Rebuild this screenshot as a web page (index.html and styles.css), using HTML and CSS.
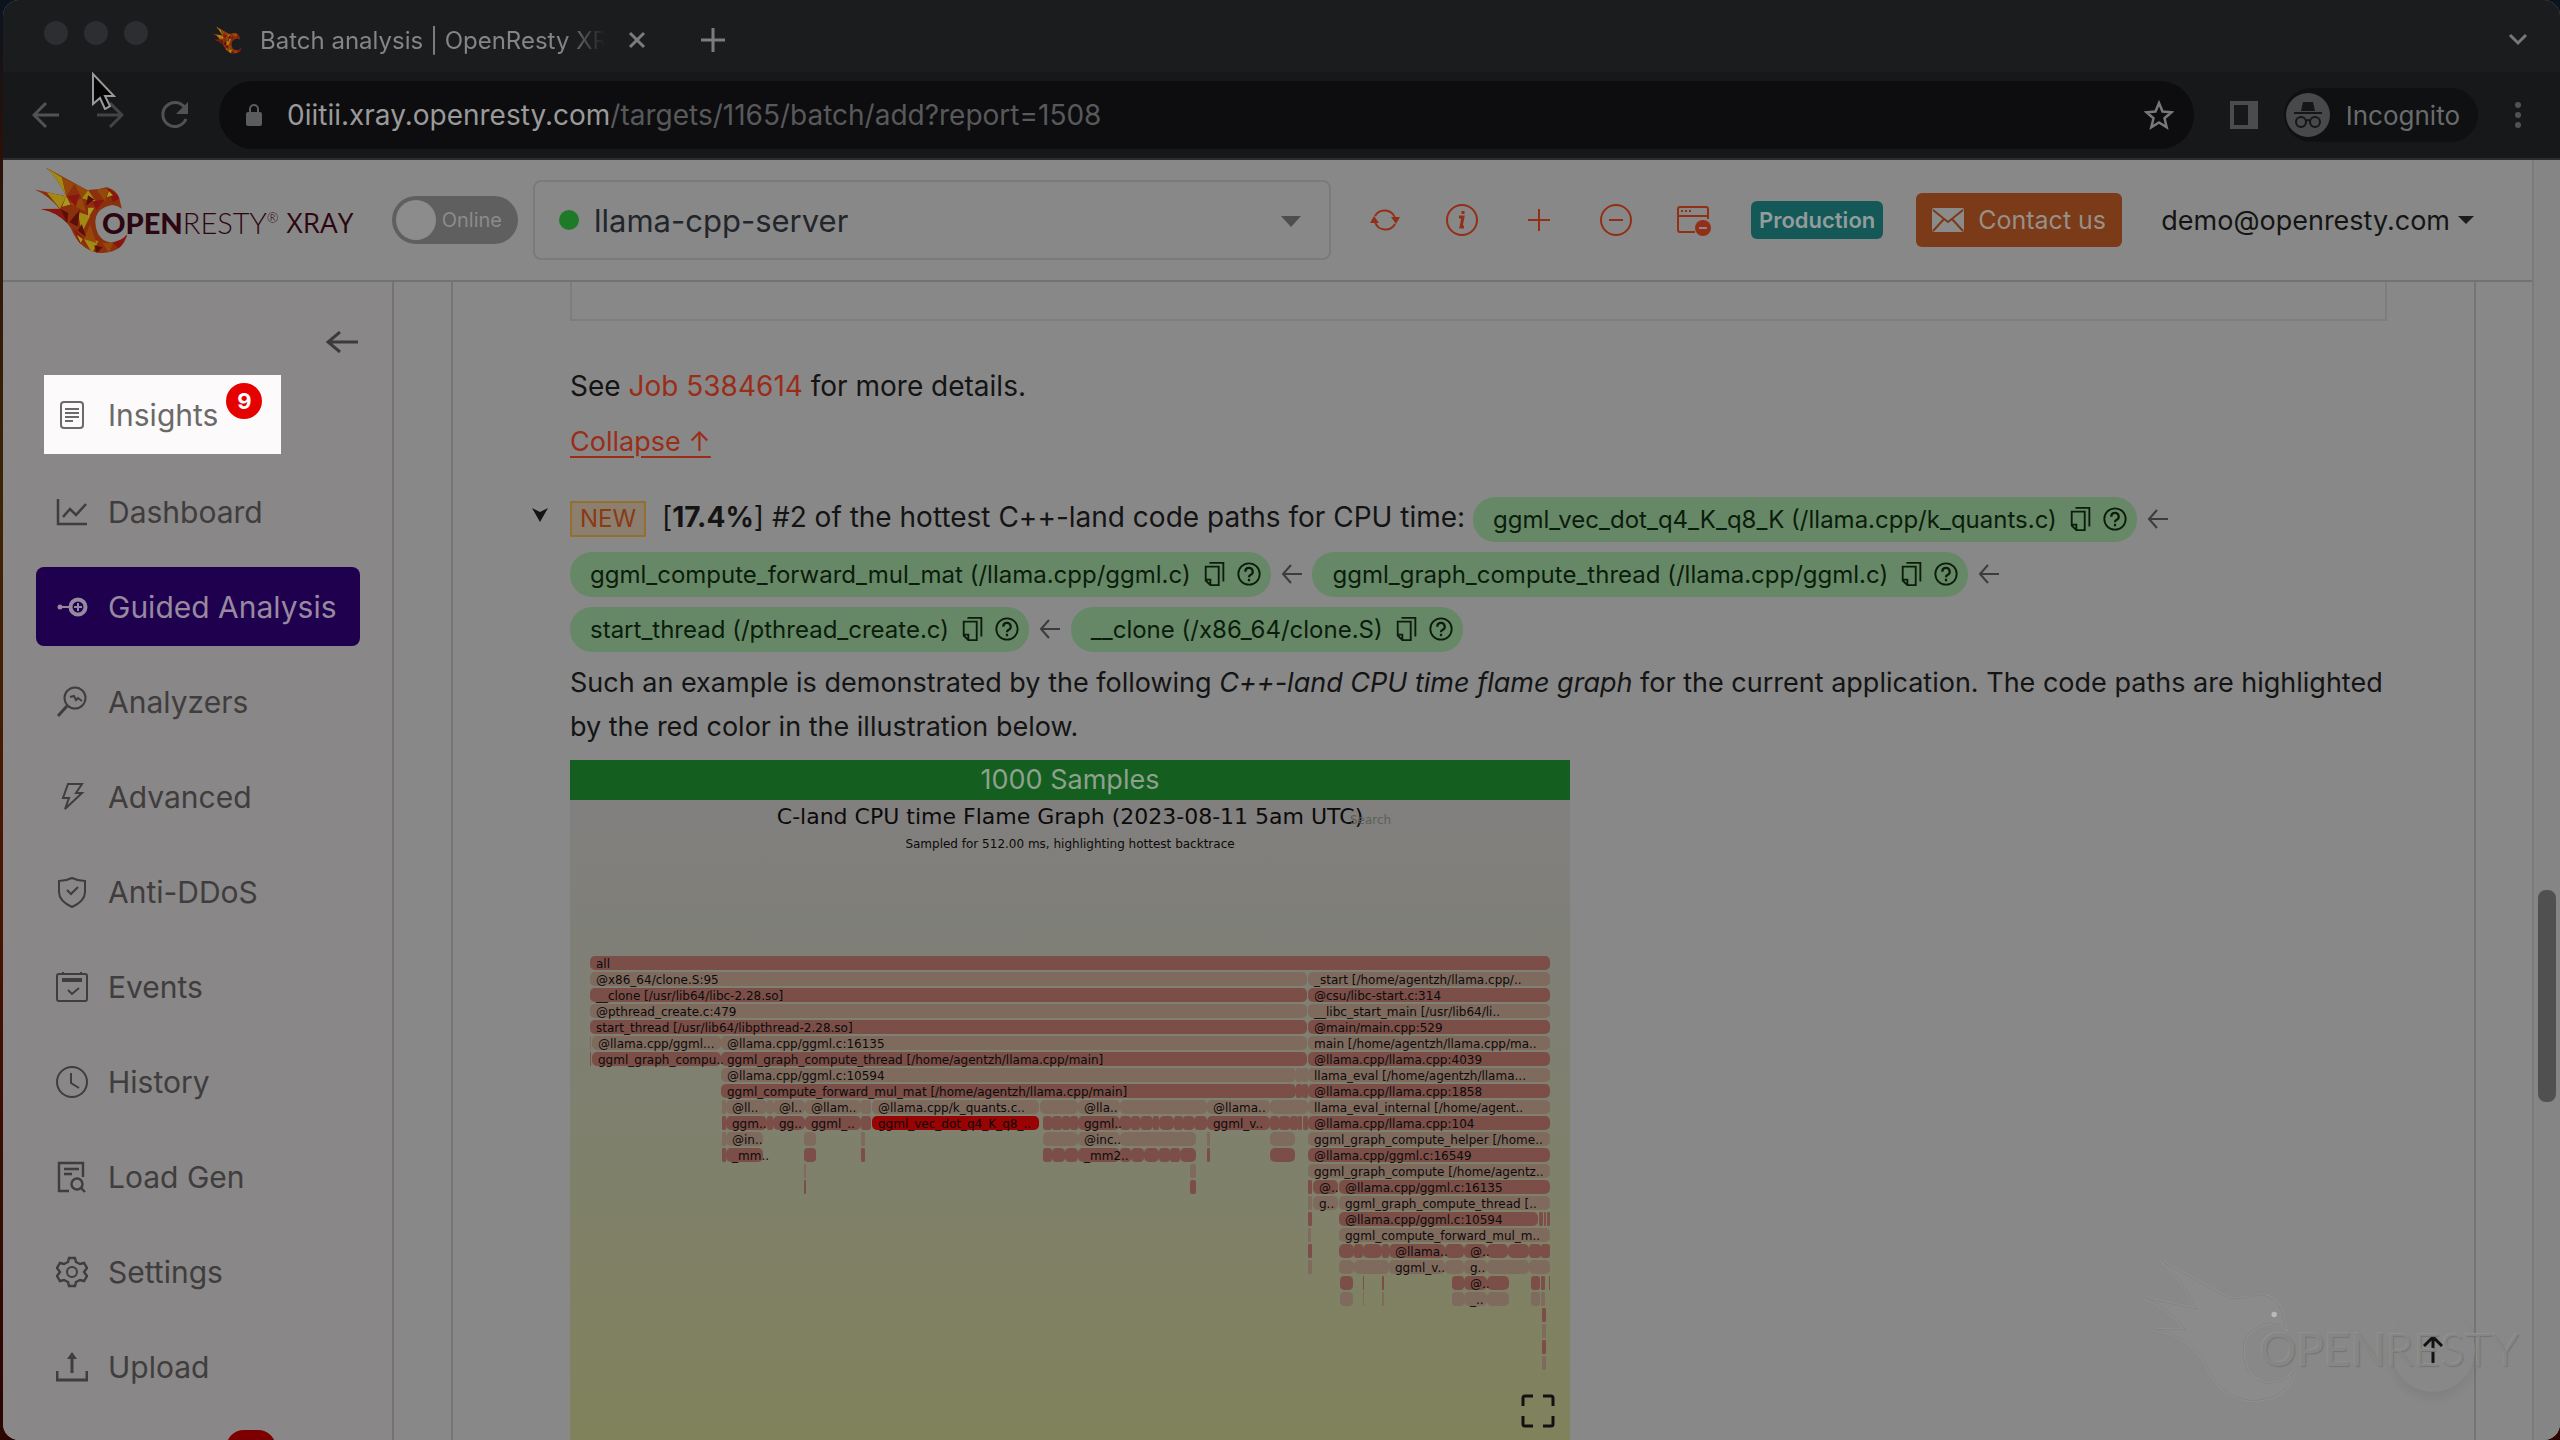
FILE: index.html
```
<!DOCTYPE html>
<html lang="en">
<head>
    <meta charset="UTF-8">
    <meta name="viewport" content="width=device-width, initial-scale=1.0">
    <title>Batch analysis | OpenResty XRAY</title>
    <link rel="stylesheet" href="styles.css">
</head>
<body>

<!-- Shared shapes -->
<svg class="defs" width="0" height="0" aria-hidden="true">
    <defs>
        <path id="bird-shape" d="M195 125 L395 235 Q440 236 490 222 Q540 235 550 275 L562 325 Q540 308 515 307 Q435 322 435 390 Q440 478 510 487 Q560 484 588 448 Q570 538 455 538 Q360 525 318 420 L300 395 Q250 340 172 326 L262 325 Q210 260 143 232 L295 265 Q250 170 195 125 Z"/>
        <clipPath id="bird-clip"><use href="#bird-shape"/></clipPath>
        <symbol id="bird" viewBox="140 120 452 422">
            <g clip-path="url(#bird-clip)">
                <rect x="130" y="110" width="480" height="440" fill="#8c2f0c"/>
                <path fill="#a08a14" d="M195 125l80 50 20 90zM200 245l95 20-30 60zM400 235l40 60-70-20zM350 340l60 20-40 80zM380 470l70 10-30 60z"/>
                <path fill="#95480c" d="M275 175l60 30-40 60zM335 205l65 30-30 40zM440 230l60 0-20 60zM310 300l60-25 20 65zM410 400l30 90-60-20zM470 490l50 0-20 50z"/>
                <path fill="#8a1510" d="M172 326l90 0 40 70zM300 265l60-10-20 60zM490 222l70 50-40 20zM330 420l50 50-20 30zM520 490l70-40-40 70zM420 290l60-10-40 50z"/>
                <path fill="#5c0f0a" d="M265 325l40 20-5 50zM360 330l-50 60 40 20zM400 260l30 20-40 30zM430 500l40 10-30 30zM370 400l20 60-40-30z"/>
                <path fill="#a89a20" d="M295 265l20 40-40 10zM400 320l30 0-30 50zM500 240l20 20-30 10zM345 450l30 20-10 20z"/>
            </g>
        </symbol>
        <symbol id="copy" viewBox="0 0 24 28">
            <g fill="none" stroke="currentColor" stroke-width="2">
                <path d="M2 6h14v20H7l-5-5z M2 20h5v6 M6 2h15v20"/>
            </g>
        </symbol>
        <symbol id="help" viewBox="0 0 28 28">
            <circle cx="14" cy="14" r="11.500" fill="none" stroke="currentColor" stroke-width="2"/>
            <path d="M10 11.500a4 4 0 1 1 5.500 3.600q-1.500.8-1.500 2.400M14 19.200v2.600" fill="none" stroke="currentColor" stroke-width="2.400"/>
        </symbol>
        <symbol id="arrow-left" viewBox="0 0 22 22">
            <path d="M21 11H2M10 2L2 11l8 9" fill="none" stroke="currentColor" stroke-width="2"/>
        </symbol>
    </defs>
</svg>

<div class="window">

    <!-- Browser tabs -->
    <div class="tab-strip">
        <div class="lights"><span></span><span></span><span></span></div>
        <div class="tab">
            <svg class="favicon"><use href="#bird"/></svg>
            <span class="tab-title">Batch analysis | OpenResty XRAY</span>
            <button class="plain" aria-label="Close tab"><svg width="18" height="18" viewBox="0 0 18 18"><path d="M2 2l14 14M16 2L2 16" stroke="#7b7c7d" stroke-width="3"/></svg></button>
        </div>
        <button class="plain new-tab" aria-label="New tab"><svg width="26" height="26" viewBox="0 0 26 26"><path d="M13 1v24M1 13h24" stroke="#7b7c7d" stroke-width="3"/></svg></button>
        <button class="plain tab-search" aria-label="Search tabs"><svg width="20" height="14" viewBox="0 0 20 14"><path d="M2 2l8 8 8-8" fill="none" stroke="#77787a" stroke-width="3"/></svg></button>
    </div>

    <!-- Browser toolbar -->
    <div class="toolbar">
        <button class="plain" aria-label="Back"><svg width="28" height="28" viewBox="0 0 28 28"><path d="M27 14H3M14 2L2 14l12 12" fill="none" stroke="#515254" stroke-width="3"/></svg></button>
        <button class="plain" aria-label="Forward"><svg width="28" height="28" viewBox="0 0 28 28"><path d="M1 14h24M14 2l12 12-12 12" fill="none" stroke="#434446" stroke-width="3"/></svg></button>
        <button class="plain" aria-label="Reload"><svg width="30" height="30" viewBox="0 0 30 30"><path d="M25 8A12 12 0 1 0 26 19" fill="none" stroke="#515254" stroke-width="3"/><path d="M28 2v12H16z" fill="#515254"/></svg></button>
        <div class="address">
            <svg width="18" height="24" viewBox="0 0 18 24"><rect x="1" y="9" width="16" height="14" rx="2" fill="#5b5c5e"/><path d="M5 10V6a4 4 0 0 1 8 0v4" fill="none" stroke="#5b5c5e" stroke-width="2"/></svg>
            <span class="url"><b>0iitii.xray.openresty.com</b>/targets/1165/batch/add?report=1508</span>
            <svg width="30" height="30" viewBox="0 0 30 30"><path d="M15 3l3.500 8.500 9 .7-7 6 2.200 9L15 22.400 7.300 27.200l2.200-9-7-6 9-.7z" fill="none" stroke="#77787a" stroke-width="2.500"/></svg>
        </div>
        <svg class="panel-icon" width="28" height="28" viewBox="0 0 28 28"><path d="M0 0h28v28H0zM4 4v20h14V4z" fill="#4b4c4e" fill-rule="evenodd"/></svg>
        <div class="incognito">
            <svg width="44" height="44" viewBox="0 0 44 44"><circle cx="22" cy="22" r="22" fill="#48494b"/><path d="M15 18l2-9h10l2 9zM8 19h28v2H8z" fill="#151618"/><g fill="none" stroke="#151618" stroke-width="2"><circle cx="15" cy="29" r="5"/><circle cx="29" cy="29" r="5"/><path d="M20 28q2-2 4 0"/></g></svg>
            Incognito
        </div>
        <button class="plain" aria-label="Menu"><svg width="8" height="28" viewBox="0 0 8 28"><g fill="#515254"><circle cx="4" cy="4" r="3"/><circle cx="4" cy="14" r="3"/><circle cx="4" cy="24" r="3"/></g></svg></button>
    </div>

    <div class="page">
        <div class="app">

            <!-- App header -->
            <header class="app-header">
                <a href="#" class="logo">
                    <svg class="logo-bird"><use href="#bird"/></svg>
                    <span class="logo-text"><b>OPEN</b>RESTY<sup>®</sup></span>
                    <span class="logo-xray">XRAY</span>
                </a>
                <label class="switch"><input type="checkbox"><span>Online</span></label>
                <div class="target">
                    <span class="target-dot"></span>
                    <select aria-label="Target"><option>llama-cpp-server</option></select>
                    <svg class="target-caret" width="20" height="11" viewBox="0 0 20 11"><path d="M0 0h20L10 11z" fill="#4e4e4e"/></svg>
                </div>
                <div class="actions">
                    <button class="plain" aria-label="Refresh"><svg width="32" height="32" viewBox="0 0 32 32"><g fill="none" stroke="#932f17" stroke-width="2"><path d="M6 12a11 11 0 0 1 20 2M26 20a11 11 0 0 1-20-2"/></g><path d="M1 19h9L5 12zM22 13h9l-4 7z" fill="#932f17"/></svg></button>
                    <button class="plain" aria-label="Info"><svg width="32" height="32" viewBox="0 0 32 32"><circle cx="16" cy="16" r="15" fill="none" stroke="#932f17" stroke-width="2"/><path d="M13 13h4l-2 10h3M17 7v3" fill="none" stroke="#932f17" stroke-width="3"/></svg></button>
                    <button class="plain" aria-label="Add"><svg width="32" height="32" viewBox="0 0 32 32"><path d="M16 5v22M5 16h22" stroke="#932f17" stroke-width="2"/></svg></button>
                    <button class="plain" aria-label="Remove"><svg width="32" height="32" viewBox="0 0 32 32"><circle cx="16" cy="16" r="15" fill="none" stroke="#932f17" stroke-width="2"/><path d="M9 16h14" stroke="#932f17" stroke-width="2"/></svg></button>
                    <button class="plain" aria-label="Disable window"><svg width="34" height="32" viewBox="0 0 34 32"><path d="M18 28H3a2 2 0 0 1-2-2V5a2 2 0 0 1 2-2h26a2 2 0 0 1 2 2v10M1 12h30M4 7h2M8 7h2M12 7h2" fill="none" stroke="#932f17" stroke-width="2"/><circle cx="26" cy="24" r="8" fill="#932f17"/><path d="M22 24h8" stroke="#888" stroke-width="2"/></svg></button>
                </div>
                <span class="env">Production</span>
                <button class="contact"><svg width="32" height="24" viewBox="0 0 32 24"><rect width="32" height="24" rx="2" fill="#8b8b8b"/><path d="M1 2l15 12L31 2M1 23l11-12M31 23L20 11" fill="none" stroke="#7b3a18" stroke-width="2"/></svg>Contact us</button>
                <button class="plain user">demo@openresty.com<svg width="16" height="8" viewBox="0 0 16 8"><path d="M0 0h16L8 8z" fill="#1c1c1c"/></svg></button>
            </header>

            <div class="columns">

                <!-- Sidebar -->
                <nav class="sidebar">
                    <button class="plain fold" aria-label="Collapse sidebar"><svg width="32" height="22" viewBox="0 0 32 22"><path d="M32 11H3M14 1L2 11l12 10" fill="none" stroke="#3c3a3a" stroke-width="3"/></svg></button>
                    <a href="#" class="nav-item highlight">
                        <svg viewBox="0 0 32 32"><rect x="5" y="3" width="22" height="26" rx="3"/><path d="M9 10h14M9 14h14M9 18h14M9 22h8"/></svg>
                        Insights<span class="badge">9</span>
                    </a>
                    <a href="#" class="nav-item"><svg viewBox="0 0 32 32"><path d="M2 3v25h29M7 21l7-8 6 6 10-11" stroke-width="2.500"/></svg>Dashboard</a>
                    <a href="#" class="nav-item active"><svg viewBox="0 0 32 32"><path d="M5 16h10" stroke-width="2"/><circle cx="4" cy="16" r="2.500" fill="currentColor" stroke="none"/><circle cx="22" cy="16" r="7.500" stroke-width="4"/><path d="M22 12v8M18 16h8"/></svg>Guided Analysis</a>
                    <a href="#" class="nav-item"><svg viewBox="0 0 32 32"><circle cx="19" cy="12" r="10.500"/><path d="M11 20L2 30" stroke-width="3"/><path d="M14 11l4-1 2 4 2-2 4 3"/></svg>Analyzers</a>
                    <a href="#" class="nav-item"><svg viewBox="0 0 32 32"><path d="M12 3h14l-6 9h6L9 28l4-11H7z"/></svg>Advanced</a>
                    <a href="#" class="nav-item"><svg viewBox="0 0 32 32"><path d="M16 2q6 3 13 3v11q0 9-13 15Q3 25 3 16V5q7 0 13-3zM11 14l4 4 7-7"/></svg>Anti-DDoS</a>
                    <a href="#" class="nav-item"><svg viewBox="0 0 32 32"><rect x="1" y="3" width="30" height="27" rx="2"/><path d="M6 9h20" stroke-width="4"/><path d="M12 19l4 4 7-6M7 1v2M25 1v2"/></svg>Events</a>
                    <a href="#" class="nav-item"><svg viewBox="0 0 32 32"><circle cx="16" cy="16" r="15"/><path d="M15 7v10l8 5"/></svg>History</a>
                    <a href="#" class="nav-item"><svg viewBox="0 0 32 32"><path d="M13 30H3V2h24v14M8 8h15M8 13h8" stroke-width="2.400"/><circle cx="21" cy="23" r="5.500" stroke-width="2.400"/><path d="M25 27l4 4" stroke-width="2.400"/></svg>Load Gen</a>
                    <a href="#" class="nav-item"><svg viewBox="0 0 32 32"><circle cx="16" cy="16" r="5"/><path d="M13 2h6l1 4 4 2 4-1 3 5-3 4 3 4-3 5-4-1-4 2-1 4h-6l-1-4-4-2-4 1-3-5 3-4-3-4 3-5 4 1 4-2z" stroke-width="2.400"/></svg>Settings</a>
                    <a href="#" class="nav-item"><svg viewBox="0 0 32 32"><path d="M1 20v9h30v-9M16 22V4" stroke-width="3"/><path d="M11 8l5-7 5 7z" fill="currentColor" stroke="none"/></svg>Upload</a>
                    <a href="#" class="nav-item"><span class="badge badge-wide">24</span></a>
                </nav>

                <!-- Report -->
                <main class="content">
                    <article class="card">
                        <div class="prev-box"></div>
                        <p class="job">See <a href="#">Job 5384614</a> for more details.</p>
                        <p class="collapse"><a href="#">Collapse ↑</a></p>
                        <div class="finding">
                            <svg class="marker" width="16" height="14" viewBox="0 0 16 14"><path d="M0 0l8 4 8-4-8 14z" fill="#141414"/></svg>
                            <span class="new">NEW</span> [<b>17.4%</b>] #2 of the hottest C++-land code paths for CPU time:
                            <span class="pill">ggml_vec_dot_q4_K_q8_K (/llama.cpp/k_quants.c)<svg><use href="#copy"/></svg><svg><use href="#help"/></svg></span>
                            <svg class="from"><use href="#arrow-left"/></svg>
                            <span class="pill">ggml_compute_forward_mul_mat (/llama.cpp/ggml.c)<svg><use href="#copy"/></svg><svg><use href="#help"/></svg></span>
                            <svg class="from"><use href="#arrow-left"/></svg>
                            <span class="pill">ggml_graph_compute_thread (/llama.cpp/ggml.c)<svg><use href="#copy"/></svg><svg><use href="#help"/></svg></span>
                            <svg class="from"><use href="#arrow-left"/></svg>
                            <span class="pill">start_thread (/pthread_create.c)<svg><use href="#copy"/></svg><svg><use href="#help"/></svg></span>
                            <svg class="from"><use href="#arrow-left"/></svg>
                            <span class="pill">__clone (/x86_64/clone.S)<svg><use href="#copy"/></svg><svg><use href="#help"/></svg></span>
                        </div>
                        <p class="explain">Such an example is demonstrated by the following <i>C++-land CPU time flame graph</i> for the current application. The code paths are highlighted by the red color in the illustration below.</p>
                        <figure class="flame">
                            <figcaption>1000 Samples</figcaption>
                            <svg id="flame-graph" width="1000" height="700" viewBox="0 0 1000 700"></svg>
                            <button class="plain expand" aria-label="Full screen"><svg width="34" height="34" viewBox="0 0 34 34"><path d="M2 12V4q0-2 2-2h8M22 2h8q2 0 2 2v8M32 22v8q0 2-2 2h-8M12 32H4q-2 0-2-2v-8" fill="none" stroke="#111" stroke-width="3"/></svg></button>
                        </figure>
                    </article>
                </main>
            </div>
        </div>
        <div class="scrollbar"><div class="thumb"></div></div>
    </div>
</div>

<!-- Floating things -->
<button class="plain to-top" aria-label="Back to top"><svg width="20" height="30" viewBox="0 0 20 30"><path d="M10 29V3M1 11l9-9 9 9" fill="none" stroke="#111" stroke-width="3"/></svg></button>
<div class="watermark">
    <svg viewBox="140 120 452 422"><use href="#bird-shape" class="mark-light"/><use href="#bird-shape" class="mark"/><circle cx="527" cy="282" r="8" fill="#bbb"/></svg>
    <span><b>OPEN</b>RESTY</span>
</div>
<svg class="cursor" width="24" height="38" viewBox="0 0 24 38"><path d="M1 2v30l7-6 5 11 5-3-5-10h9z" fill="#050505" stroke="#9a9a9a" stroke-width="2"/></svg>

<script src="script.js"></script>
</body>
</html>
```
FILE: styles.css
```
* {
    box-sizing: border-box;
}

body {
    margin: 0;
    height: 100vh;
    overflow: hidden;
    font-family: Inter, "Liberation Sans", sans-serif;
    font-size: 27px;
    color: #141414;
    background: linear-gradient(#0a1420 0%, #2a1008 10%, #3d2405 35%, #4a1503 60%, #2a0502 100%);
}

p, figure {
    margin: 0;
}

a {
    color: #9a2d18;
    text-decoration: none;
}

button, select {
    font: inherit;
    color: inherit;
}

.plain {
    padding: 0;
    border: none;
    background: none;
    display: flex;
    align-items: center;
}

.defs {
    position: absolute;
}

/* Window */
.window {
    height: 100%;
    margin-left: 3px;
    display: flex;
    flex-direction: column;
    overflow: hidden;
    border-radius: 16px;
    background: #888888;
}

.tab-strip {
    flex: none;
    height: 72px;
    padding: 8px 32px 0 41px;
    display: flex;
    align-items: center;
    background: #1b1c1e;
    font-size: 24px;
    color: #848586;
}

.lights {
    display: flex;
    gap: 16px;
    margin-bottom: 14px;
}

.lights span {
    width: 24px;
    height: 24px;
    border-radius: 50%;
    background: #2c2e31;
}

.tab {
    display: flex;
    align-items: center;
    margin-left: 64px;
}

.favicon {
    width: 30px;
    height: 32px;
}

.tab-title {
    width: 345px;
    margin: 0 23px 0 18px;
    overflow: hidden;
    white-space: nowrap;
    mask-image: linear-gradient(90deg, #000 88%, transparent);
}

.new-tab {
    margin-left: 54px;
}

.tab-search {
    margin-left: auto;
}

.toolbar {
    flex: none;
    height: 88px;
    padding: 0 38px 0 29px;
    display: flex;
    align-items: center;
    gap: 36px;
    background: #17181a;
    border-bottom: 2px solid #2c2d2f;
    color: #6a6b6d;
}

.address {
    flex: 1;
    height: 68px;
    margin-left: -7px;
    padding: 0 20px 0 26px;
    display: flex;
    align-items: center;
    gap: 24px;
    border-radius: 34px;
    background: #0d0d0f;
    color: #58595b;
    font-size: 28px;
}

.url {
    flex: 1;
}

.url b {
    font-weight: 400;
    color: #9a9a9a;
}

.panel-icon {
    margin-right: -10px;
}

.incognito {
    height: 54px;
    padding: 0 18px 0 2px;
    display: flex;
    align-items: center;
    gap: 16px;
    border-radius: 27px;
    background: #0f1012;
    font-size: 26px;
}

/* App header */
.page {
    flex: 1;
    min-height: 0;
    display: flex;
}

.app {
    flex: 1;
    min-width: 0;
    display: flex;
    flex-direction: column;
}

.app-header {
    flex: none;
    height: 122px;
    padding: 0 58px 0 31px;
    display: flex;
    align-items: center;
    border-bottom: 2px solid #727272;
}

.logo {
    width: 325px;
    height: 88px;
    flex: none;
    position: relative;
    display: flex;
    align-items: center;
    padding: 24px 0 0 68px;
    color: #2c0610;
    font-size: 29px;
    margin-top: -20px;
    gap: 8px;
}

.logo-bird {
    position: absolute;
    left: 0;
    top: 0;
    width: 94px;
    height: 88px;
}

.logo-text {
    position: relative;
    font-family: Lato, sans-serif;
    font-weight: 300;
}

.logo-text b {
    font-weight: 900;
}

.logo-text sup {
    font-size: 14px;
    line-height: 1;
}

.logo-xray {
    font-family: "Open Sans", sans-serif;
    font-size: 28px;
}

.switch {
    position: relative;
    width: 126px;
    height: 48px;
    flex: none;
    margin-left: 33px;
    display: flex;
    align-items: center;
    justify-content: flex-end;
    padding-right: 16px;
    border-radius: 24px;
    background: #5f5f5f;
    color: #8b8b8b;
    font-size: 20px;
}

.switch input {
    appearance: none;
    position: absolute;
    left: 4px;
    top: 4px;
    width: 40px;
    height: 40px;
    margin: 0;
    border-radius: 50%;
    background: #8c8c8c;
}

.target {
    position: relative;
    flex: 0 1 798px;
    margin-left: 15px;
}

.target select {
    appearance: none;
    width: 100%;
    height: 80px;
    padding: 0 60px 0 59px;
    border: 2px solid #7b7b7b;
    border-radius: 8px;
    background: #888888;
    font-size: 31px;
    color: #22262b;
}

.target-dot {
    position: absolute;
    left: 26px;
    top: 30px;
    width: 20px;
    height: 20px;
    border-radius: 50%;
    background: #1f7a28;
}

.target-caret {
    position: absolute;
    right: 30px;
    top: 36px;
}

.actions {
    display: flex;
    gap: 45px;
    margin-left: 38px;
}

.env {
    margin-left: 40px;
    padding: 0 8px;
    line-height: 38px;
    border-radius: 6px;
    background: #155858;
    color: #929c9c;
    font-size: 22px;
    font-weight: 600;
}

.contact {
    height: 54px;
    margin-left: 33px;
    padding: 0 16px;
    display: flex;
    align-items: center;
    gap: 14px;
    border: none;
    border-radius: 6px;
    background: #7b3a18;
    color: #969088;
    font-size: 25px;
}

.user {
    margin-left: auto;
    gap: 8px;
    white-space: nowrap;
}

/* Sidebar */
.columns {
    flex: 1;
    min-height: 0;
    display: flex;
    overflow: hidden;
}

.sidebar {
    flex: none;
    width: 391px;
    padding: 48px 34px 0 33px;
    border-right: 2px solid #737373;
    background: #898787;
}

.fold {
    height: 24px;
    margin: 0 0 21px auto;
}

.nav-item {
    height: 79px;
    margin-bottom: 16px;
    padding: 0 20px;
    display: flex;
    align-items: center;
    border-radius: 8px;
    color: #3f3d3d;
    font-size: 30px;
    white-space: nowrap;
}

.nav-item > svg {
    flex: none;
    width: 32px;
    height: 32px;
    margin-right: 20px;
    fill: none;
    stroke: currentColor;
    stroke-width: 2;
}

.nav-item.active {
    margin-right: -2px;
    background: #1f004f;
    color: #97899f;
}

/* The step the viewer should look at is left undimmed */
.nav-item.highlight {
    width: 237px;
    margin: 0 0 18px 8px;
    padding: 0 12px;
    border-radius: 0;
    background: #fcfafa;
    color: #6b6969;
}

.badge {
    min-width: 36px;
    height: 36px;
    margin: 0 0 28px 8px;
    border-radius: 18px;
    background: #e60000;
    color: #ffffff;
    font-size: 22px;
    font-weight: 700;
    line-height: 36px;
    text-align: center;
}

.badge-wide {
    width: 50px;
    margin-left: 170px;
    background: #7d0000;
    color: #8b8b8b;
}

/* Report */
.content {
    flex: 1;
    min-width: 0;
    padding: 0 56px 0 57px;
}

.card {
    height: 100%;
    overflow: hidden;
    padding: 0 70px 0 117px;
    border: 2px solid #757575;
    border-width: 0 2px;
}

.prev-box {
    height: 39px;
    margin-right: 17px;
    border: 2px solid #7d7d7d;
    border-top: none;
}

.job {
    margin-top: 43px;
    font-size: 28px;
    line-height: 44px;
}

.collapse {
    margin-top: 12px;
    line-height: 44px;
}

.collapse a {
    text-decoration: underline;
    text-underline-offset: 5px;
}

.finding {
    position: relative;
    margin-top: 26px;
    font-size: 28px;
    line-height: 55px;
}

.marker {
    position: absolute;
    left: -38px;
    top: 18px;
}

.new {
    display: inline-block;
    margin-right: 8px;
    padding: 0 8px;
    border: 2px solid #94702f;
    background: #8c7f70;
    color: #8a3a14;
    font-size: 24px;
    line-height: 32px;
}

.pill {
    display: inline-flex;
    align-items: center;
    height: 45px;
    padding: 0 8px 0 20px;
    border-radius: 22px;
    background: #668866;
    color: #0c1c0c;
    font-size: 24px;
    line-height: 45px;
    vertical-align: middle;
    white-space: nowrap;
}

.pill svg {
    width: 24px;
    height: 26px;
    margin-left: 12px;
}

.pill svg + svg {
    width: 28px;
    margin-left: 8px;
}

.from {
    width: 22px;
    height: 22px;
    margin: 0 2px;
    color: #3c3c3c;
    vertical-align: middle;
}

.explain {
    margin-top: 6px;
    line-height: 44px;
}

.flame {
    position: relative;
    width: 1000px;
    margin-top: 11px;
}

.flame figcaption {
    height: 40px;
    background: #145f20;
    color: #8fa08f;
    line-height: 40px;
    text-align: center;
}

.flame > svg {
    display: block;
    background: linear-gradient(#82807f, #7f7f78 20%, #80825c 90%);
}

#flame-graph text {
    font-family: "DejaVu Sans", sans-serif;
    font-size: 12px;
    fill: #0c0a0a;
}

#flame-graph .title {
    font-size: 22px;
    text-anchor: middle;
}

#flame-graph .subtitle {
    text-anchor: middle;
}

#flame-graph .search {
    fill: #5d5d5a;
}

.dark {
    fill: #7b4f48;
}

.light {
    fill: #7f6a5e;
}

.hot {
    fill: #9a0303;
}

.expand {
    position: absolute;
    right: 15px;
    top: 634px;
}

.scrollbar {
    flex: none;
    width: 28px;
    padding: 730px 4px 0;
    border-left: 2px solid #7b7b7b;
    background: #858585;
}

.thumb {
    height: 212px;
    border-radius: 8px;
    background: #505050;
}

/* Floating things */
.to-top {
    position: absolute;
    right: 85px;
    bottom: 48px;
    width: 84px;
    height: 84px;
    justify-content: center;
    border-radius: 50%;
    background: #888888;
    box-shadow: 0 6px 10px rgba(0, 0, 0, 0.06);
}

.watermark {
    position: absolute;
    right: 41px;
    bottom: 38px;
    display: flex;
    align-items: center;
    color: #868686;
    font-family: Lato, sans-serif;
    font-size: 46px;
    font-weight: 300;
    text-shadow: 1px 1px 1px #747474, -1px -1px 1px #929292;
    pointer-events: none;
}

.watermark svg {
    width: 152px;
    height: 142px;
    margin-right: -36px;
    overflow: visible;
}

.watermark span {
    padding-top: 34px;
}

.mark {
    fill: #8b8b8b;
    stroke: #7c7c7c;
    stroke-width: 2;
}

.mark-light {
    fill: none;
    stroke: #949494;
    stroke-width: 7;
}

.cursor {
    position: absolute;
    left: 92px;
    top: 72px;
}
```
FILE: script.js
```
const svg = document.getElementById("flame-graph");
const NS = "http://www.w3.org/2000/svg";

// One list per stack level, each frame is [x, width, label]
const levels = [
    [[20, 960, "all"]],
    [[20, 717, "@x86_64/clone.S:95"], [738, 242, "_start [/home/agentzh/llama.cpp/.."]],
    [[20, 717, "__clone [/usr/lib64/libc-2.28.so]"], [738, 242, "@csu/libc-start.c:314"]],
    [[20, 717, "@pthread_create.c:479"], [738, 242, "__libc_start_main [/usr/lib64/li.."]],
    [[20, 717, "start_thread [/usr/lib64/libpthread-2.28.so]"], [738, 242, "@main/main.cpp:529"]],
    [[20, 1], [22, 129, "@llama.cpp/ggml..."], [151, 586, "@llama.cpp/ggml.c:16135"], [738, 242, "main [/home/agentzh/llama.cpp/ma.."]],
    [[20, 1], [22, 129, "ggml_graph_compu.."], [151, 586, "ggml_graph_compute_thread [/home/agentzh/llama.cpp/main]"], [738, 242, "@llama.cpp/llama.cpp:4039"]],
    [[151, 575, "@llama.cpp/ggml.c:10594"], [726, 6], [732, 6], [738, 242, "llama_eval [/home/agentzh/llama..."]],
    [[151, 575, "ggml_compute_forward_mul_mat [/home/agentzh/llama.cpp/main]"], [726, 6], [732, 6], [738, 242, "@llama.cpp/llama.cpp:1858"]],
    [[152, 4], [156, 41, "@ll.."], [197, 6], [203, 32, "@l.."], [235, 56, "@llam.."], [291, 10], [302, 167, "@llama.cpp/k_quants.c.."], [470, 38], [508, 42, "@lla.."], [550, 87], [637, 63, "@llama.."], [700, 38], [738, 242, "llama_eval_internal [/home/agent.."]],
    [[152, 4], [156, 41, "ggm.."], [197, 6], [203, 32, "gg.."], [235, 56, "ggml_.."], [291, 10], [302, 167, "ggml_vec_dot_q4_K_q8_..", "hot"], [473, 9], [482, 10], [492, 8], [500, 8], [508, 42, "ggml.."], [550, 11], [561, 9], [570, 13], [583, 6], [589, 15], [604, 9], [613, 11], [624, 13], [637, 63, "ggml_v.."], [700, 9], [709, 11], [720, 8], [728, 4], [733, 5], [738, 242, "@llama.cpp/llama.cpp:104"]],
    [[152, 4], [156, 37, "@in.."], [234, 12], [291, 4], [473, 35], [508, 42, "@inc.."], [550, 76], [637, 3], [700, 25], [738, 242, "ggml_graph_compute_helper [/home.."]],
    [[152, 4], [156, 37, "_mm.."], [234, 12], [291, 4], [473, 9], [482, 13], [495, 13], [508, 42, "_mm2.."], [550, 11], [561, 13], [574, 15], [589, 11], [600, 10], [610, 16], [637, 3], [700, 25], [738, 242, "@llama.cpp/ggml.c:16549"]],
    [[234, 2], [620, 6], [738, 242, "ggml_graph_compute [/home/agentz.."]],
    [[234, 2], [620, 6], [738, 4], [743, 25, "@.."], [769, 211, "@llama.cpp/ggml.c:16135"]],
    [[738, 4], [743, 25, "g.."], [769, 211, "ggml_graph_compute_thread [.."]],
    [[738, 4], [769, 199, "@llama.cpp/ggml.c:10594"], [969, 4], [974, 2], [977, 3]],
    [[738, 3], [769, 211, "ggml_compute_forward_mul_m.."]],
    [[738, 4], [769, 15], [784, 9], [793, 19], [812, 7], [819, 56, "@llama.."], [875, 19], [894, 23, "@.."], [917, 21], [938, 21], [959, 12], [971, 9]],
    [[738, 4], [769, 15], [784, 35], [819, 56, "ggml_v.."], [875, 19], [894, 23, "g.."], [917, 42], [959, 21]],
    [[770, 13], [793, 1], [812, 2], [882, 12], [894, 23, "@.."], [917, 22], [961, 9], [971, 4], [979, 1]],
    [[770, 13], [793, 1], [812, 2], [882, 12], [894, 23, "_.."], [917, 22], [961, 9], [971, 4]],
    [[972, 4]],
    [[972, 4]],
    [[972, 4]],
    [[972, 4]]
];

function add(tag, attrs, text) {
    const el = document.createElementNS(NS, tag);
    for (const key in attrs) {
        el.setAttribute(key, attrs[key]);
    }
    if (text) {
        el.textContent = text;
    }
    svg.appendChild(el);
}

add("text", { x: 500, y: 24, class: "title" }, "C-land CPU time Flame Graph (2023-08-11 5am UTC)");
add("text", { x: 500, y: 48, class: "subtitle" }, "Sampled for 512.00 ms, highlighting hottest backtrace");
add("text", { x: 780, y: 24, class: "search" }, "Search");

// Labels go on after all the frames, so that a long one may run over its neighbour
const labels = [];

levels.forEach((frames, level) => {
    const y = 156 + level * 16;
    const shade = level % 2 ? "light" : "dark";
    frames.forEach(([x, width, label, cls]) => {
        add("rect", { x, y, width, height: 14, rx: Math.min(5, width / 3), class: cls || shade });
        if (label) {
            labels.push([x + 6, y + 12, label]);
        }
    });
});

labels.forEach(([x, y, label]) => add("text", { x, y }, label));
```
